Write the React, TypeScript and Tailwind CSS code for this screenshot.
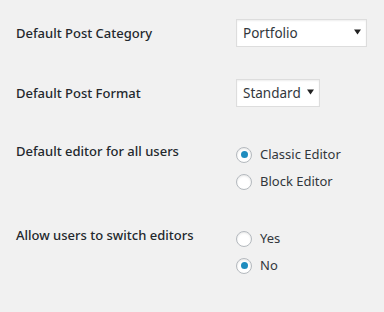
import React from 'react';

const font = { fontFamily: '"Noto Sans", "Open Sans", sans-serif' };

function SelectBox({ value, width }: { value: string; width: string }) {
  return (
    <div
      className={`${width} h-[28px] bg-white border border-[#dddddd] shadow-[inset_0_1px_2px_rgba(0,0,0,0.07)] flex items-center justify-between pl-[6px] pr-[5px] text-[13.5px] text-[#32373c]`}
    >
      <span>{value}</span>
      <svg width="7" height="6" viewBox="0 0 7 6" className="mb-[3px]">
        <path d="M0 0.5 L7 0.5 L3.5 5.5 Z" fill="#222" />
      </svg>
    </div>
  );
}

function Radio({ label, checked }: { label: string; checked?: boolean }) {
  return (
    <div className="h-[27px] flex items-center gap-[8px] text-[13px] text-[#32373c]">
      <span className="w-[16px] h-[16px] rounded-full border border-[#b4b9be] bg-white shadow-[inset_0_1px_2px_rgba(0,0,0,0.1)] flex items-center justify-center">
        {checked && <span className="w-[7px] h-[7px] rounded-full bg-[#1e8cbe]" />}
      </span>
      <span>{label}</span>
    </div>
  );
}

export default function App() {
  return (
    <div className="w-[384px] h-[312px] overflow-hidden bg-[#f1f1f1] pl-[16px]" style={font}>
      <div className="flex items-center mt-[19px]">
        <div className="w-[220px] pt-[2px] text-[13px] font-medium text-[#23282d]">Default Post Category</div>
        <SelectBox value="Portfolio" width="w-[131px]" />
      </div>

      <div className="flex items-center mt-[32px]">
        <div className="w-[220px] pt-[2px] text-[13px] font-medium text-[#23282d]">Default Post Format</div>
        <SelectBox value="Standard" width="w-[84px]" />
      </div>

      <div className="flex mt-[34px]">
        <div className="w-[220px] text-[13px] leading-[20px] font-medium text-[#23282d]">
          Default editor for all users
        </div>
        <div className="flex flex-col">
          <Radio label="Classic Editor" checked />
          <Radio label="Block Editor" />
        </div>
      </div>

      <div className="flex mt-[30px]">
        <div className="w-[220px] text-[13px] leading-[20px] font-medium text-[#23282d]">
          Allow users to switch editors
        </div>
        <div className="flex flex-col">
          <Radio label="Yes" />
          <Radio label="No" checked />
        </div>
      </div>

      <div className="flex mt-[31px]">
        <div className="w-[220px] text-[13px] leading-[20px] font-medium text-[#23282d]">
          Enable for all post types
        </div>
      </div>
    </div>
  );
}
